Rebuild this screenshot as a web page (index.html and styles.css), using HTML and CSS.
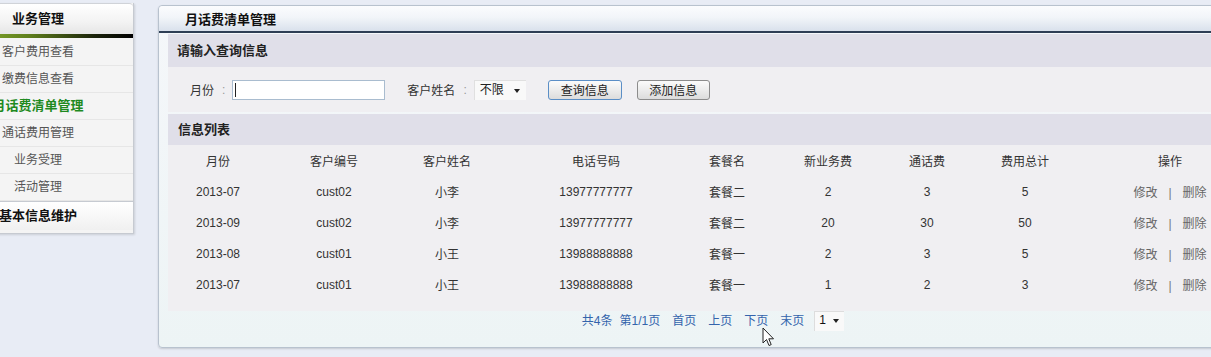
FILE: index.html
```html
<!DOCTYPE html>
<html lang="zh-CN">
<head>
    <meta charset="UTF-8">
    <title>月话费清单管理</title>
    <link rel="stylesheet" href="styles.css">
</head>
<body>
    <!-- 左侧菜单 -->
    <div class="sidebar">
        <div class="side-head">业务管理</div>
        <div class="side-bar"></div>
        <ul class="side-list">
            <li>客户费用查看</li>
            <li>缴费信息查看</li>
            <li class="active">月话费清单管理</li>
            <li>通话费用管理</li>
            <li>业务受理</li>
            <li>活动管理</li>
        </ul>
        <div class="side-head side-head2">基本信息维护</div>
    </div>

    <!-- 主内容 -->
    <div class="main">
        <div class="main-title">月话费清单管理</div>
        <div class="main-body">
            <div class="sec-title">请输入查询信息</div>
            <div class="query">
                <span class="label">月份</span><span class="colon">:</span>
                <div class="input"><span class="caret"></span></div>
                <span class="label label-name">客户姓名</span><span class="colon">:</span>
                <div class="select">不限<span class="arrow"></span></div>
                <button type="button" class="btn btn-search">查询信息</button>
                <button type="button" class="btn btn-add">添加信息</button>
            </div>

            <div class="sec-title sec-list">信息列表</div>
            <div class="list">
                <table>
                    <colgroup>
                        <col class="c1"><col class="c2"><col class="c3"><col class="c4"><col class="c5">
                        <col class="c6"><col class="c7"><col class="c8"><col class="c9">
                    </colgroup>
                    <thead>
                        <tr>
                            <th>月份</th><th>客户编号</th><th>客户姓名</th><th>电话号码</th><th>套餐名</th>
                            <th>新业务费</th><th>通话费</th><th>费用总计</th><th>操作</th>
                        </tr>
                    </thead>
                    <tbody>
                        <tr>
                            <td>2013-07</td><td>cust02</td><td>小李</td><td>13977777777</td><td>套餐二</td>
                            <td>2</td><td>3</td><td>5</td>
                            <td class="ops"><a>修改</a><span class="sep">|</span><a>删除</a></td>
                        </tr>
                        <tr>
                            <td>2013-09</td><td>cust02</td><td>小李</td><td>13977777777</td><td>套餐二</td>
                            <td>20</td><td>30</td><td>50</td>
                            <td class="ops"><a>修改</a><span class="sep">|</span><a>删除</a></td>
                        </tr>
                        <tr>
                            <td>2013-08</td><td>cust01</td><td>小王</td><td>13988888888</td><td>套餐一</td>
                            <td>2</td><td>3</td><td>5</td>
                            <td class="ops"><a>修改</a><span class="sep">|</span><a>删除</a></td>
                        </tr>
                        <tr>
                            <td>2013-07</td><td>cust01</td><td>小王</td><td>13988888888</td><td>套餐一</td>
                            <td>1</td><td>2</td><td>3</td>
                            <td class="ops"><a>修改</a><span class="sep">|</span><a>删除</a></td>
                        </tr>
                    </tbody>
                </table>
            </div>

            <div class="pager">
                <a class="first">共4条</a><a>第1/1页</a><a>首页</a><a>上页</a><a>下页</a><a>末页</a>
                <div class="page-select">1<span class="arrow"></span></div>
            </div>
        </div>
    </div>

    <!-- 鼠标指针 -->
    <svg class="cursor" width="13" height="21" viewBox="0 0 13 21">
        <path d="M1 1 L1 16 L4.5 12.5 L7 18.5 L9.2 17.6 L6.8 11.8 L11.5 11.8 Z" fill="#fff" stroke="#222" stroke-width="1" stroke-linejoin="round"/>
    </svg>
</body>
</html>
```

FILE: styles.css
```css
html, body {
    margin: 0;
    padding: 0;
    height: 357px;
    overflow: hidden;
}
body {
    display: flex;
    align-items: flex-start;
    background: #e8ecf5;
    font-family: "Liberation Sans", "Noto Sans CJK SC", sans-serif;
    font-size: 12px;
    color: #333;
    position: relative;
}
/* 左侧菜单 */
.sidebar {
    margin-left: -57px;
    margin-top: 3px;
    width: 190px;
    flex-shrink: 0;
    background: #f4f4f4;
    border-right: 1px solid #c6cad1;
    border-bottom: 1px solid #c6cad1;
    box-shadow: 1px 1px 2px rgba(0,0,0,0.12);
    padding-bottom: 3px;
}
.side-head {
    height: 30px;
    line-height: 30px;
    text-align: center;
    font-weight: bold;
    font-size: 13px;
    color: #111;
    background: linear-gradient(#ffffff, #f3f3f3 60%, #e6e6e6);
    border-top: 1px solid #d0d3d8;
    border-radius: 0 4px 0 0;
}
.side-bar {
    height: 4px;
    background: linear-gradient(to right, #9cc53a, #5f7f1c 45%, #1a220a 80%, #000);
}
.side-list {
    list-style: none;
    margin: 0;
    padding: 1px 0 0;
}
.side-list li {
    height: 26px;
    line-height: 26px;
    text-align: center;
    color: #555;
    border-bottom: 1px solid #e6e6e6;
}
.side-list li.active {
    color: #1f8a1f;
    font-weight: bold;
    font-size: 13px;
}
.side-head2 {
    height: 28px;
    line-height: 28px;
    border-radius: 0;
    border-top: 1px solid #c6cad1;
    background: linear-gradient(#ffffff, #f0f0f0);
}
/* 主内容 */
.main {
    margin-left: 24px;
    margin-top: 5px;
    width: 1108px;
    flex-shrink: 0;
    border: 1px solid #b8c2ce;
    border-radius: 4px;
    background: linear-gradient(#f5f7fa, #edf4f5);
    box-shadow: 0 1px 2px rgba(0,0,0,0.15);
}
.main-title {
    height: 25px;
    line-height: 27px;
    padding-left: 26px;
    font-weight: bold;
    font-size: 13px;
    color: #111;
    background: linear-gradient(#fbfcfe, #f2f5f9 45%, #d9e1ec);
    border-bottom: 2px solid #2e3e55;
    border-radius: 4px 4px 0 0;
}
.main-body {
    padding: 1px 9px 0 9px;
}
.sec-title {
    height: 33px;
    line-height: 33px;
    padding-left: 9px;
    font-weight: bold;
    font-size: 13px;
    color: #222;
    background: #e0dfe9;
}
.sec-list {
    height: 31px;
    line-height: 31px;
    padding-left: 10px;
}
.query {
    height: 45px;
    margin-bottom: 2px;
    background: #f0eff2;
    display: flex;
    align-items: center;
    padding-left: 22px;
}
.label {
    color: #333;
}
.label-name {
    margin-left: 22px;
}
.colon {
    color: #999;
    margin: 0 7px 0 8px;
}
.input {
    width: 151px;
    height: 18px;
    border: 1px solid #a9bccf;
    background: #fff;
    position: relative;
}
.caret {
    position: absolute;
    left: 2px;
    top: 2px;
    width: 1px;
    height: 14px;
    background: #222;
}
.select {
    width: 46px;
    height: 19px;
    line-height: 19px;
    padding-left: 5px;
    border-top: 1px solid #e0e0e0;
    border-left: 1px solid #e0e0e0;
    background: #f9f9f9;
    color: #222;
    position: relative;
}
.arrow {
    position: absolute;
    right: 6px;
    top: 8px;
    border-left: 3px solid transparent;
    border-right: 3px solid transparent;
    border-top: 4px solid #222;
}
.btn {
    height: 20px;
    padding: 0;
    font-family: inherit;
    font-size: 12px;
    color: #222;
    border-radius: 3px;
    background: linear-gradient(#fbfbfb, #ececec 50%, #dcdcdc);
    cursor: pointer;
}
.btn-search {
    width: 74px;
    margin-left: 22px;
    border: 1px solid #5a8ec6;
}
.btn-add {
    width: 73px;
    margin-left: 15px;
    border: 1px solid #8c8c8c;
}
/* 信息列表 */
.list {
    background: #f0eff2;
    padding-bottom: 11px;
}
table {
    table-layout: fixed;
    width: 1076px;
    border-collapse: collapse;
}
.c1 { width: 100px; }
.c2 { width: 132px; }
.c3 { width: 94px; }
.c4 { width: 204px; }
.c5 { width: 58px; }
.c6 { width: 144px; }
.c7 { width: 54px; }
.c8 { width: 142px; }
.c9 { width: 148px; }
th, td {
    height: 31px;
    padding: 0;
    text-align: center;
    font-weight: normal;
    color: #333;
    white-space: nowrap;
}
.ops a {
    color: #666;
}
.ops .sep {
    color: #777;
    margin: 0 11px;
}
/* 分页 */
.pager {
    height: 20px;
    line-height: 20px;
    padding-bottom: 16px;
    display: flex;
    justify-content: center;
    align-items: center;
}
.pager a {
    color: #3464ac;
    margin-left: 12px;
}
.pager a.first {
    margin-left: 0;
}
.pager a:nth-child(2) {
    margin-left: 7px;
}
.page-select {
    width: 25px;
    height: 19px;
    line-height: 17px;
    margin-left: 10px;
    padding-left: 4px;
    border-top: 1px solid #ddd;
    border-left: 1px solid #ddd;
    background: #f9f9f9;
    color: #111;
    position: relative;
}
.page-select .arrow {
    right: 5px;
    top: 7px;
}
.cursor {
    position: absolute;
    left: 762px;
    top: 327px;
}
```
